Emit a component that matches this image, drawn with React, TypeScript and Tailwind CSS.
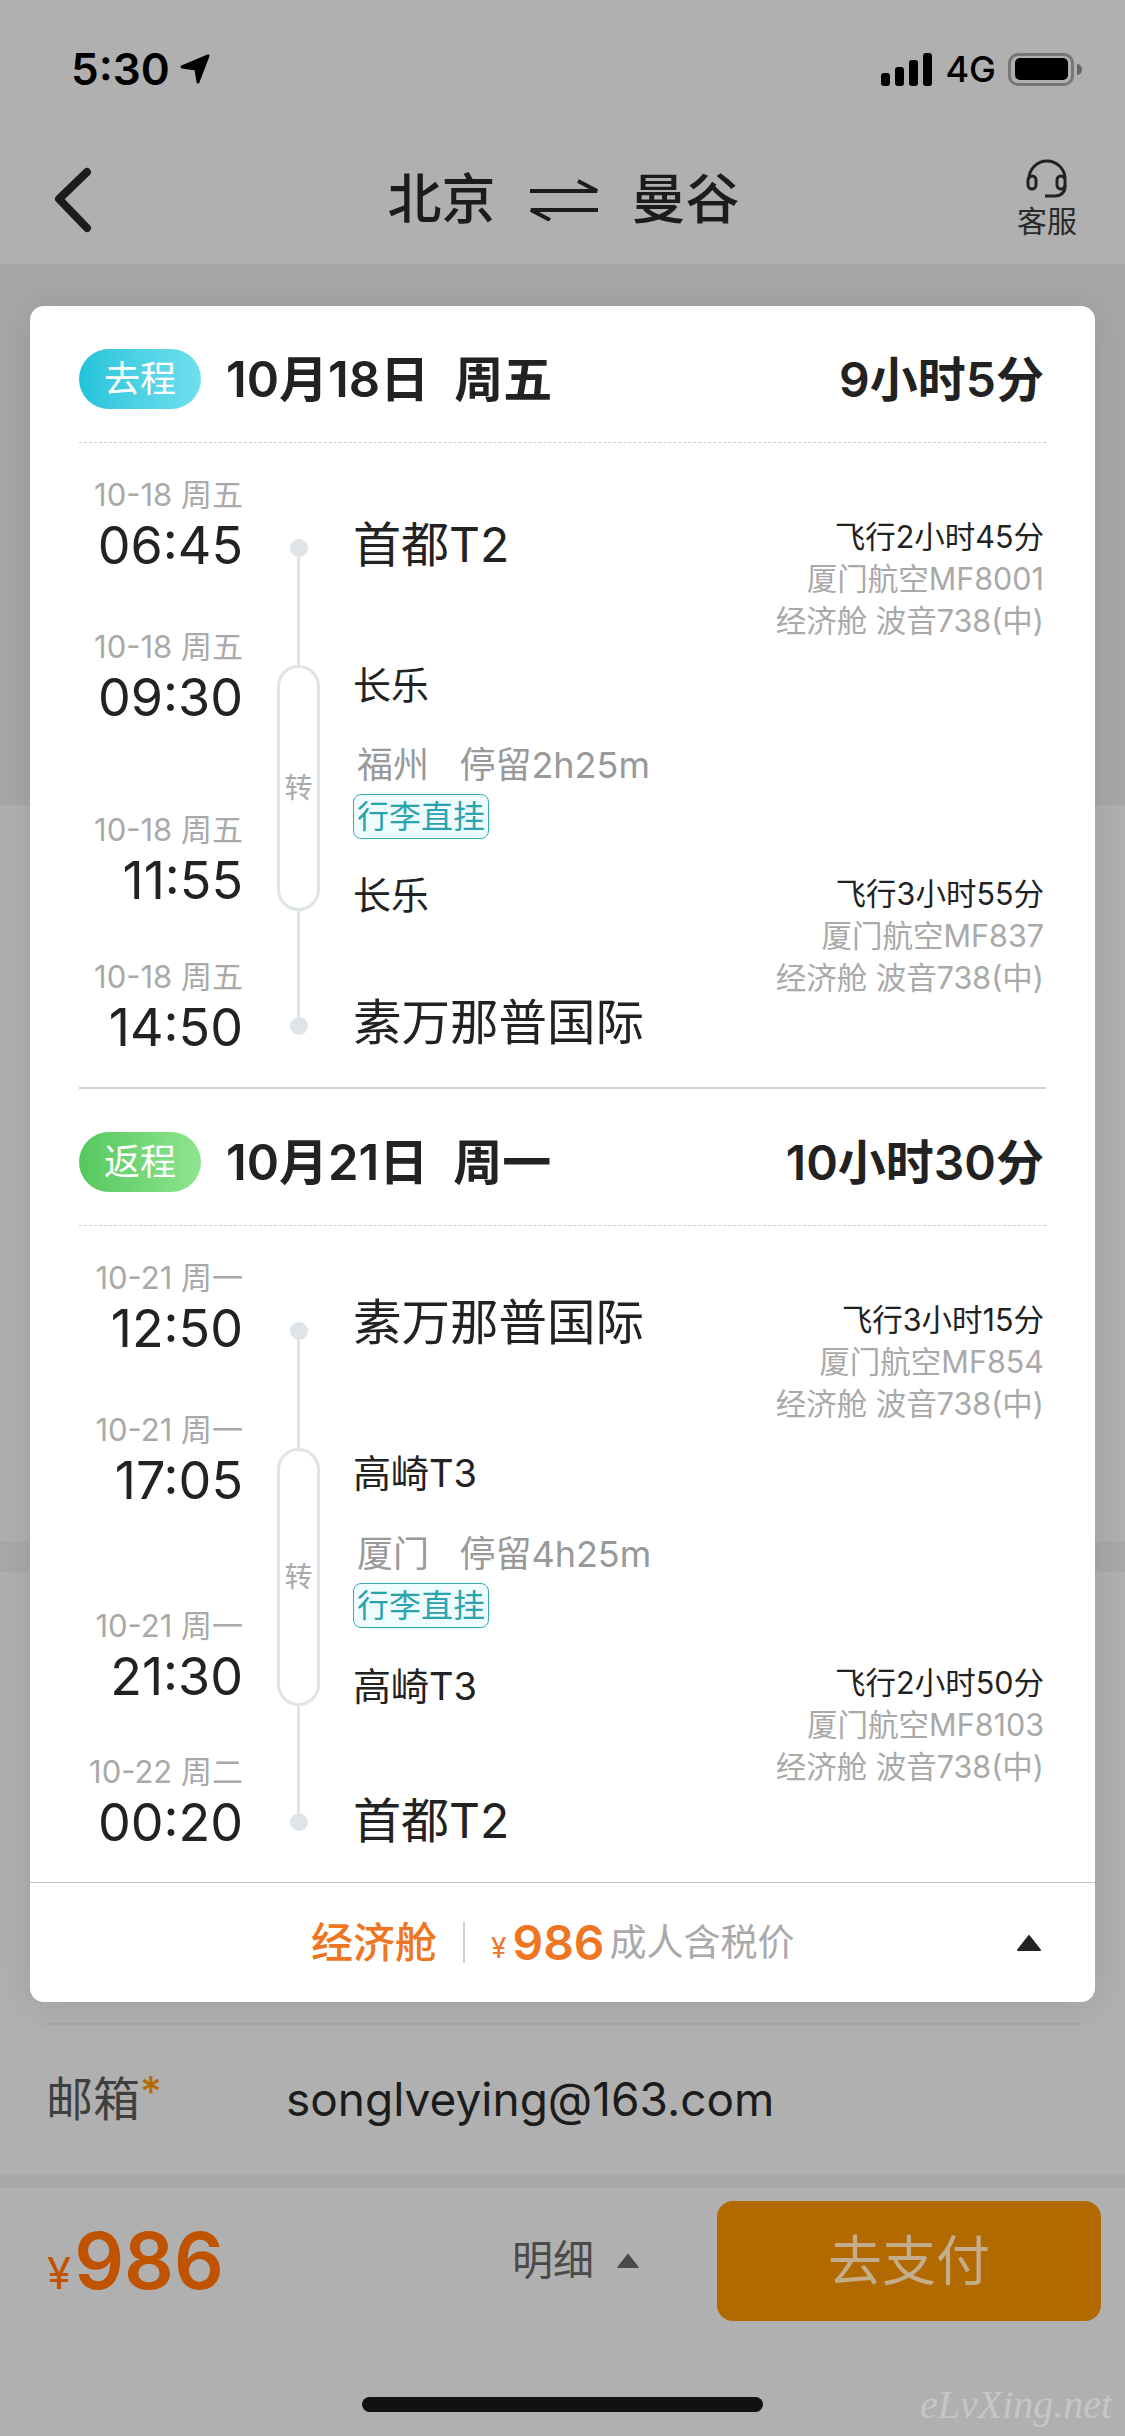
import React from 'react';

interface Stop {
  label: string;
  time: string;
  gap?: string;
}

interface FlightInfo {
  fly: string;
  airline: string;
  cabin: string;
}

interface LegProps {
  badge: string;
  badgeClass: string;
  date: string;
  week: string;
  duration: string;
  stops: Stop[];
  pillClass: string;
  dotGap: string;
  from: string;
  fromClass: string;
  first: FlightInfo;
  viaA: string;
  viaClass: string;
  stay: string;
  stayClass: string;
  second: FlightInfo;
  secondClass: string;
  viaBClass: string;
  to: string;
  toClass: string;
  padClass: string;
}

function Details({ info }: { info: FlightInfo }) {
  return (
    <div className="flex flex-col items-end text-[30.5px] leading-[42px] text-[#a9a9a9]">
      <div className="text-[#222]">{info.fly}</div>
      <div>{info.airline}</div>
      <div>{info.cabin}</div>
    </div>
  );
}

function Leg(p: LegProps) {
  return (
    <div>
      <div className="mx-[49px] flex h-[137px] items-center justify-between border-b border-dashed border-[#cfcfcf] pt-[9px]">
        <div className="flex items-center">
          <div className={`flex h-[60px] w-[122px] items-center justify-center rounded-full text-[36px] text-white ${p.badgeClass}`}>
            {p.badge}
          </div>
          <div className="ml-[25px] mt-[2px] flex text-[49px] font-semibold text-[#222]">
            <span>{p.date}</span>
            <span className="ml-[25px]">{p.week}</span>
          </div>
        </div>
        <div className="mr-[2px] mt-[2px] text-[48px] font-semibold text-[#222]">{p.duration}</div>
      </div>

      <div className={`flex ${p.padClass}`}>
        <div className="flex w-[213px] shrink-0 flex-col items-end pt-[32px]">
          {p.stops.map((s) => (
            <div key={s.label + s.time} className={`flex flex-col items-end ${s.gap ?? ''}`}>
              <div className="h-[40px] text-[31px] leading-[40px] text-[#a9a9a9]">{s.label}</div>
              <div className="h-[62px] text-[52px] leading-[62px] text-[#222]">{s.time}</div>
            </div>
          ))}
        </div>

        <div className="ml-[34px] flex w-[43px] shrink-0 flex-col items-center pt-[96px]">
          <div className="h-[18px] w-[18px] rounded-full bg-[#dfe4e8]" />
          <div className="h-[108px] w-[3px] bg-[#dfe4e8]" />
          <div className={`flex w-[43px] items-center justify-center rounded-full border-[3px] border-[#dfe4e8] text-[28px] text-[#a9a9a9] ${p.pillClass}`}>
            转
          </div>
          <div className={`w-[3px] bg-[#dfe4e8] ${p.dotGap}`} />
          <div className="h-[18px] w-[18px] rounded-full bg-[#dfe4e8]" />
        </div>

        <div className="ml-[33px] flex min-w-0 flex-1 flex-col pr-[51px] pt-[73px]">
          <div className="flex items-start justify-between">
            <div className={`text-[#222] ${p.fromClass}`}>{p.from}</div>
            <Details info={p.first} />
          </div>
          <div className={`h-[44px] text-[38px] leading-[44px] text-[#222] ${p.viaClass}`}>{p.viaA}</div>
          <div className={`ml-[4px] h-[44px] text-[36px] leading-[44px] text-[#999] whitespace-pre ${p.stayClass}`}>{p.stay}</div>
          <div className="mt-[7px] flex h-[45px] w-[136px] items-center justify-center rounded-[8px] border border-[#3aa9b3] bg-[#eefcfd] text-[32px] text-[#2aa3ad]">
            行李直挂
          </div>
          <div className={`flex items-start justify-between ${p.secondClass}`}>
            <div className={`text-[38px] text-[#222] ${p.viaBClass}`}>{p.viaA}</div>
            <Details info={p.second} />
          </div>
          <div className={`text-[#222] ${p.toClass}`}>{p.to}</div>
        </div>
      </div>
    </div>
  );
}

function StatusBar() {
  return (
    <div className="flex h-[42px] items-center justify-between pl-[71px] pr-[43px] text-black">
      <div className="flex items-center">
        <span className="text-[44px] font-semibold leading-[42px]">5:30</span>
        <svg width="32" height="32" viewBox="0 0 32 32" className="ml-[9px]">
          <path d="M29 3 L3 14 L17 16 L19 29 Z" fill="#000" stroke="#000" strokeWidth="3" strokeLinejoin="round" />
        </svg>
      </div>
      <div className="flex items-center">
        <svg width="52" height="33" viewBox="0 0 52 33">
          <rect x="0" y="20" width="9" height="13" rx="3" fill="#000" />
          <rect x="14" y="14" width="9" height="19" rx="3" fill="#000" />
          <rect x="28" y="7" width="9" height="26" rx="3" fill="#000" />
          <rect x="42" y="0" width="9" height="33" rx="3" fill="#000" />
        </svg>
        <span className="ml-[12px] text-[36px] font-medium leading-[42px]">4G</span>
        <div className="ml-[12px] flex h-[33px] w-[66px] items-center justify-center rounded-[10px] border-[3px] border-[#777]">
          <div className="h-[22px] w-[53px] rounded-[5px] bg-black" />
        </div>
        <div className="ml-[3px] h-[11px] w-[5px] rounded-r-full bg-[#666]" />
      </div>
    </div>
  );
}

function NavBar() {
  return (
    <div className="mt-[64px] grid h-[90px] grid-cols-[1fr_auto_1fr] items-center pl-[50px] pr-[48px] text-[#1c1c1c]">
      <svg width="48" height="72" viewBox="0 0 48 72">
        <path d="M37 9 L9 36 L37 65" fill="none" stroke="#1c1c1c" strokeWidth="8" strokeLinecap="round" strokeLinejoin="round" />
      </svg>
      <div className="flex items-center text-[54px] font-medium">
        <span>北京</span>
        <svg width="70" height="44" viewBox="0 0 70 44" className="mx-[33px]">
          <path d="M1 14 H68 L49 4" fill="none" stroke="#1c1c1c" strokeWidth="4" />
          <path d="M69 33 H2 L21 43" fill="none" stroke="#1c1c1c" strokeWidth="4" />
        </svg>
        <span>曼谷</span>
      </div>
      <div className="flex flex-col items-center justify-self-end">
        <svg width="42" height="40" viewBox="0 0 42 40">
          <path d="M3 20 A18 18 0 0 1 39 20" fill="none" stroke="#222" strokeWidth="3" />
          <rect x="2" y="17" width="8" height="13" rx="4" fill="none" stroke="#222" strokeWidth="3" />
          <rect x="31" y="17" width="8" height="13" rx="4" fill="none" stroke="#222" strokeWidth="3" />
          <path d="M39 26 V28 C39 34 34 37 29 37 H19" fill="none" stroke="#222" strokeWidth="3" />
        </svg>
        <span className="mt-[3px] text-[30px] leading-[38px] text-[#2a2a2a]">客服</span>
      </div>
    </div>
  );
}

function Triangle({ className }: { className: string }) {
  return (
    <svg viewBox="0 0 26 18" className={className}>
      <path d="M13 2 L24 16 H2 Z" fill="currentColor" stroke="currentColor" strokeWidth="2" strokeLinejoin="round" />
    </svg>
  );
}

export default function App() {
  return (
    <div className="relative h-[2436px] w-[1125px] overflow-hidden bg-[#b0b0b0] font-['Inter','Noto_Sans_CJK_SC',sans-serif]">
      <div className="h-[264px] pt-[48px]">
        <StatusBar />
        <NavBar />
      </div>
      <div className="h-[541px] bg-[#a7a7a7]" />
      <div className="h-[736px]" />
      <div className="h-[31px] bg-[#a9a9a9]" />
      <div className="h-[451px]" />
      <div className="mx-[45px] h-[2px] bg-[#a6a6a6]" />
      <div className="flex h-[149px] items-center pl-[46px]">
        <div className="flex w-[240px] items-start">
          <span className="text-[47px] text-[#3f3f3f]">邮箱</span>
          <span className="text-[42px] font-medium leading-[56px] text-[#b36b00]">*</span>
        </div>
        <span className="text-[46px] text-[#1c1c1c]">songlveying@163.com</span>
      </div>
      <div className="h-[14px] bg-[#a9a9a9]" />

      <div className="pt-[13px]">
        <div className="flex h-[120px] items-center pl-[47px] pr-[24px]">
          <span className="mt-[24px] text-[44px] text-[#bf5300]">¥</span>
          <span className="ml-[3px] text-[78px] font-semibold leading-none text-[#bf5300]">986</span>
          <div className="ml-auto mr-[77px] flex items-center">
            <span className="text-[41px] text-[#4a4a4a]">明细</span>
            <Triangle className="ml-[22px] h-[16px] w-[24px] text-[#4a4a4a]" />
          </div>
          <div className="flex h-[120px] w-[384px] items-center justify-center rounded-[16px] bg-[#b26a00] text-[54px] text-[#c4ad8a]">
            去支付
          </div>
        </div>
        <div className="mx-auto mt-[76px] h-[15px] w-[401px] rounded-full bg-[#111]" />
      </div>

      <div className="absolute left-[30px] top-[306px] w-[1065px] overflow-hidden rounded-[14px] bg-white shadow-[0_0_40px_rgba(0,0,0,0.1)]">
        <Leg
          badge="去程"
          badgeClass="bg-gradient-to-r from-[#1fc3da] to-[#6fe0ef]"
          date="10月18日"
          week="周五"
          duration="9小时5分"
          stops={[
            { label: '10-18 周五', time: '06:45' },
            { label: '10-18 周五', time: '09:30', gap: 'mt-[50px]' },
            { label: '10-18 周五', time: '11:55', gap: 'mt-[81px]' },
            { label: '10-18 周五', time: '14:50', gap: 'mt-[45px]' },
          ]}
          pillClass="h-[246px]"
          dotGap="h-[106px]"
          from="首都T2"
          fromClass="text-[48px] leading-[58px]"
          first={{ fly: '飞行2小时45分', airline: '厦门航空MF8001', cabin: '经济舱 波音738(中)' }}
          viaA="长乐"
          viaClass="mt-[21px]"
          stay="福州   停留2h25m"
          stayClass="mt-[36px]"
          second={{ fly: '飞行3小时55分', airline: '厦门航空MF837', cabin: '经济舱 波音738(中)' }}
          secondClass="mt-[34px]"
          viaBClass="leading-[44px]"
          to="素万那普国际"
          toClass="-mt-[5px] text-[48.5px] leading-[58px]"
          padClass="h-[644px]"
        />
        <div className="mx-[49px] h-[2px] bg-[#cfcfcf]" />
        <Leg
          badge="返程"
          badgeClass="bg-gradient-to-r from-[#55c85e] to-[#8ee58f]"
          date="10月21日"
          week="周一"
          duration="10小时30分"
          stops={[
            { label: '10-21 周一', time: '12:50' },
            { label: '10-21 周一', time: '17:05', gap: 'mt-[50px]' },
            { label: '10-21 周一', time: '21:30', gap: 'mt-[94px]' },
            { label: '10-22 周二', time: '00:20', gap: 'mt-[44px]' },
          ]}
          pillClass="h-[258px]"
          dotGap="h-[107px]"
          from="素万那普国际"
          fromClass="text-[48.5px] leading-[48px]"
          first={{ fly: '飞行3小时15分', airline: '厦门航空MF854', cabin: '经济舱 波音738(中)' }}
          viaA="高崎T3"
          viaClass="mt-[26px]"
          stay="厦门   停留4h25m"
          stayClass="mt-[37px]"
          second={{ fly: '飞行2小时50分', airline: '厦门航空MF8103', cabin: '经济舱 波音738(中)' }}
          secondClass="mt-[34px]"
          viaBClass="leading-[48px]"
          to="首都T2"
          toClass="mt-[4px] text-[48px] leading-[58px]"
          padClass="h-[656px]"
        />
        <div className="flex h-[120px] items-center border-t border-[#c4c4c4] pl-[281px] pr-[53px]">
          <span className="text-[42px] font-medium text-[#ee7623]">经济舱</span>
          <div className="mx-[26px] h-[41px] w-[2px] bg-[#cfcfcf]" />
          <span className="mt-[10px] text-[28px] text-[#ee7623]">¥</span>
          <span className="ml-[6px] text-[48px] font-semibold text-[#ee7623]">986</span>
          <span className="ml-[5px] text-[37px] text-[#a9a9a9]">成人含税价</span>
          <Triangle className="ml-auto h-[18px] w-[26px] text-[#222]" />
        </div>
      </div>

      <div className="absolute left-[920px] top-[2380px] font-['Liberation_Serif',serif] text-[40px] leading-[50px] italic text-[#c6c6c6]">
        eLvXing.net
      </div>
    </div>
  );
}
